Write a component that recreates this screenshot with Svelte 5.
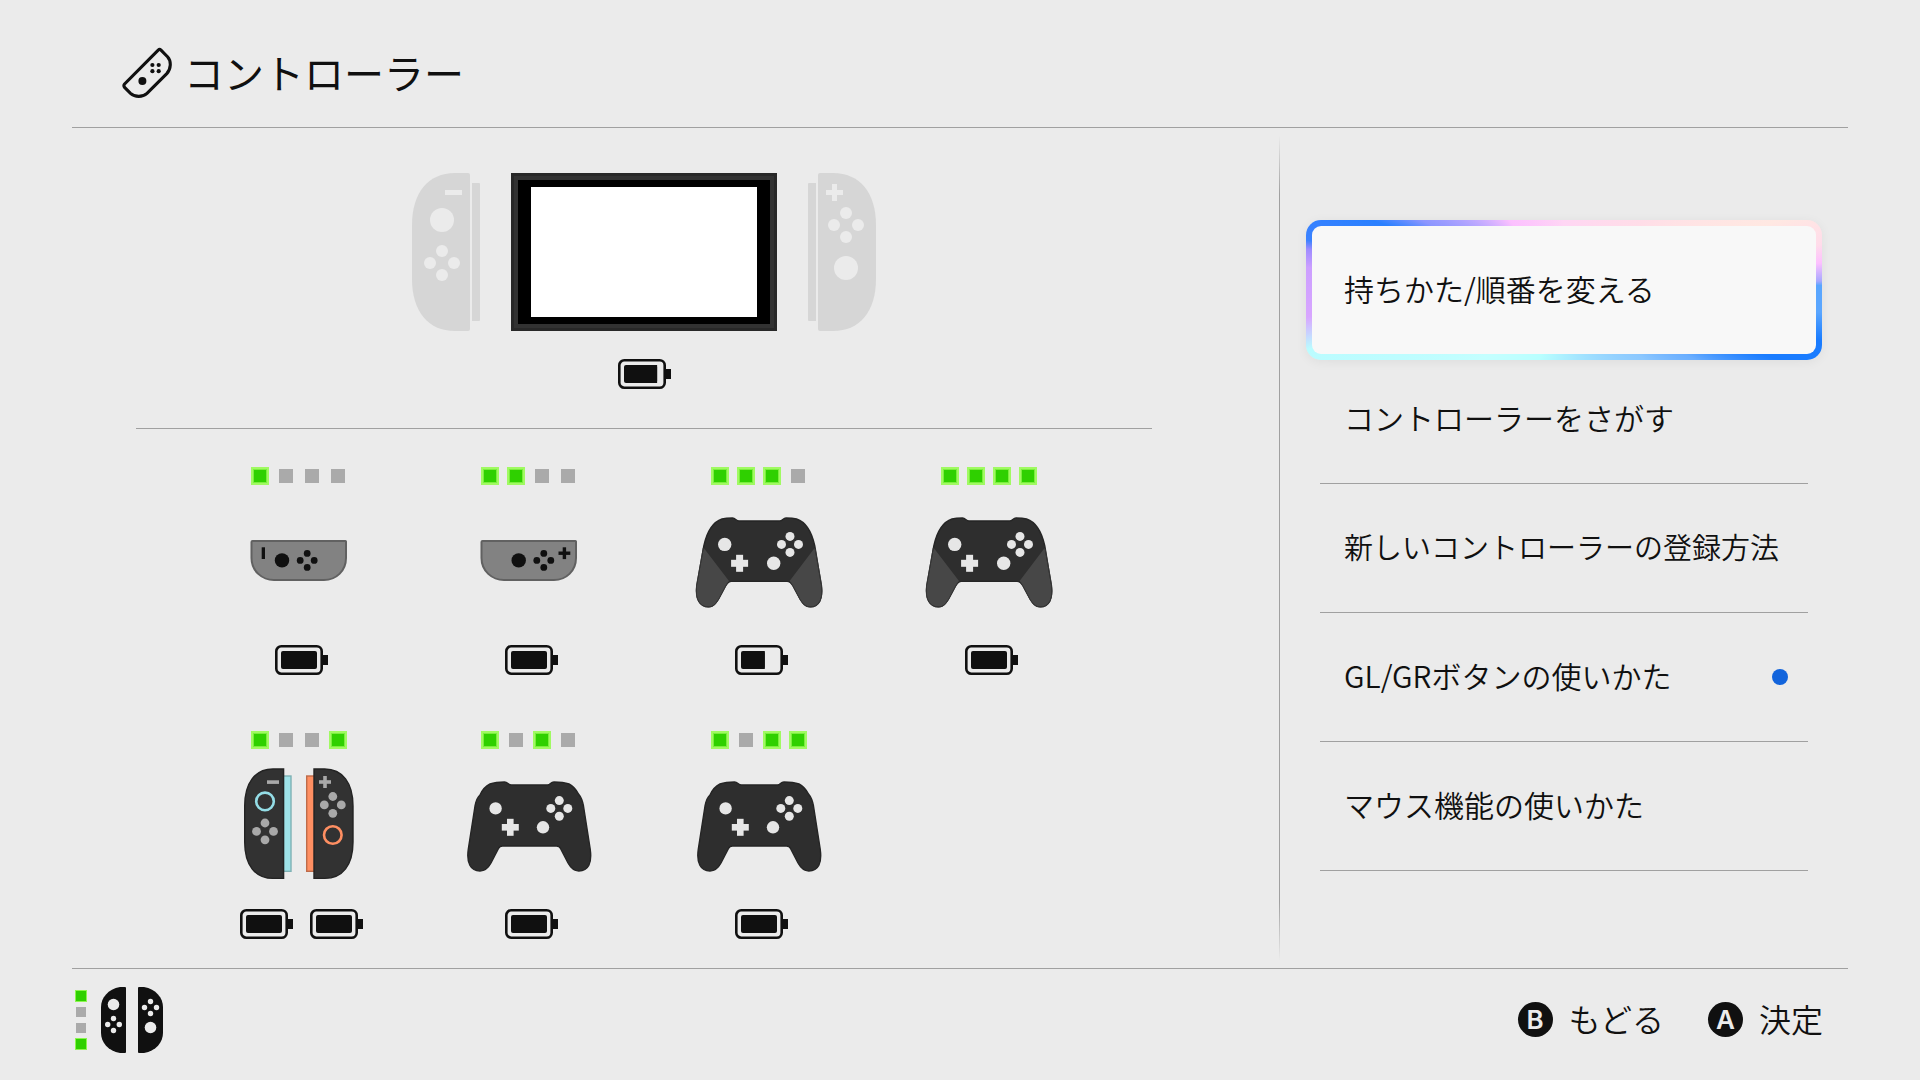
<script>
  // Controllers screen: console status, paired controllers, action menu

  let selected = $state(0);

  const menu = [
    { label: '持ちかた/順番を変える' },
    { label: 'コントローラーをさがす' },
    { label: '新しいコントローラーの登録方法', long: true },
    { label: 'GL/GRボタンの使いかた', unread: true },
    { label: 'マウス機能の使いかた' }
  ];

  // leds: player lamps, left to right. batteries: charge in percent
  const controllers = [
    { type: 'single-left', leds: [1, 0, 0, 0], batteries: [100] },
    { type: 'single-right', leds: [1, 1, 0, 0], batteries: [100] },
    { type: 'pro-grip', leds: [1, 1, 1, 0], batteries: [66] },
    { type: 'pro-grip', leds: [1, 1, 1, 1], batteries: [100] },
    { type: 'pair', leds: [1, 0, 0, 1], batteries: [100, 100] },
    { type: 'pro', leds: [1, 0, 1, 0], batteries: [100] },
    { type: 'pro', leds: [1, 0, 1, 1], batteries: [100] }
  ];
</script>

{#snippet battery(level)}
  <svg class="battery" width="53" height="30" viewBox="0 0 53 30" role="img" aria-label="{level}%">
    <rect x="1.3" y="1.3" width="45.4" height="27.4" rx="5" fill="none" stroke="#101010" stroke-width="2.6" />
    <rect x="47" y="10" width="6" height="10" fill="#101010" />
    <rect x="6" y="6" width={level * 0.36} height="18" rx="2" fill="#101010" />
    {#if level < 100}
      <rect x="12" y="6" width={level * 0.36 - 6} height="18" fill="#101010" />
    {/if}
  </svg>
{/snippet}

<!-- four round buttons in a diamond -->
{#snippet diamond(x, y, dx, dy, r)}
  <circle cx={x} cy={y - dy} {r} />
  <circle cx={x - dx} cy={y} {r} />
  <circle cx={x + dx} cy={y} {r} />
  <circle cx={x} cy={y + dy} {r} />
{/snippet}

{#snippet plus(x, y, size, thick)}
  <rect x={x - size / 2} y={y - thick / 2} width={size} height={thick} />
  <rect x={x - thick / 2} y={y - size / 2} width={thick} height={size} />
{/snippet}

{#snippet device(type)}
  <svg width="140" height="120" viewBox="0 0 140 120" aria-hidden="true">
    {#if type === 'single-left' || type === 'single-right'}
      <path d="M23.5 40H116.5Q117 40 117 40.5V57C117 70 107 79 95 79H45C33 79 22.5 70 22.5 57V41Q22.5 40 23.5 40Z" fill="#828282" stroke="#616161" stroke-width="2" />
      <g fill="#101010">
        {#if type === 'single-left'}
          <rect x="32.7" y="46.3" width="3.3" height="11.7" />
          <circle cx="53" cy="59.4" r="7.2" />
          {@render diamond(78.2, 59.4, 7, 7, 3.4)}
        {:else}
          <circle cx="59.7" cy="59.4" r="7.2" />
          {@render diamond(84.8, 59.4, 7, 7, 3.4)}
          {@render plus(105.4, 52.2, 11.8, 3.4)}
        {/if}
      </g>
    {:else if type === 'pair'}
      <rect x="54" y="11" width="8" height="95.3" fill="#9fe3e9" stroke="#7eb1b4" stroke-width="1.4" />
      <rect x="77.7" y="11" width="8" height="95.3" fill="#ff8f62" stroke="#be6b4a" stroke-width="1.4" />
      <g fill="#323232" stroke="#232323" stroke-width="1.4">
        <path d="M54.6 4H44C26 4 15.7 18 15.7 41V77C15.7 100 26 113.4 44 113.4H54.6Z" />
        <path d="M85 4H95.6C113.6 4 124 18 124 41V77C124 100 113.6 113.4 95.6 113.4H85Z" />
      </g>
      <g fill="#a9a9a9">
        <rect x="38" y="15.3" width="12" height="3.6" />
        {@render diamond(36, 66.4, 8.5, 8.4, 4.4)}
        {@render plus(96, 17, 12, 3.6)}
        {@render diamond(103.8, 39.9, 8.5, 8.4, 4.4)}
      </g>
      <circle cx="36" cy="36.4" r="8.8" fill="none" stroke="#94dde6" stroke-width="2.6" />
      <circle cx="103.8" cy="70" r="8.8" fill="none" stroke="#ff8f62" stroke-width="2.6" />
    {:else if type === 'pro-grip'}
      <path d="M33 18C37 17 41 17 43.5 17C46.5 17 47 20 50 20H90.6C93.6 20 94 17 97 17C100 17 103.6 17 107.6 18C118 21.5 123 32 125.8 45L132.2 84C134.2 98 130 105.8 121.5 105.8C116 105.8 113.5 102 111 98L104 85C102 81.5 100.5 80.4 98 80.4H42.6C40 80.4 38.6 81.5 36.6 85L29.6 98C27 102 24.6 105.8 19.5 105.8C10.6 105.8 6 98 8 84L14.8 45C17.6 32 22.6 21.5 33 18Z" fill="#2e2e2e" stroke="#252525" stroke-width="1.4" />
      <g fill="#474747">
        <path d="M14.8 47L40 80Q38.6 81 36.6 85L29.6 98C27 102 24.6 105.6 19.5 105.6C10.6 105.6 6 98 8 84Z" />
        <path d="M125.6 47L100.6 80Q102 81 104 85L111 98C113.5 102 116 105.6 121.5 105.6C130 105.6 134 98 132 84Z" />
      </g>
      <g fill="none" stroke="#363636">
        <path d="M14.3 47L7.6 84C5.8 98 10.6 106 19.5 106C24.6 106 27 102.5 29.8 98L36.6 85L38.5 82" />
        <path d="M126 47L132.6 84C134.4 98 130 106 121.5 106C116 106 113.5 102.5 110.8 98L104 85L102 82" />
      </g>
      <g fill="#e6e6e6">
        <circle cx="35.7" cy="43.4" r="6.7" />
        <circle cx="84.7" cy="62.3" r="6.7" />
        {@render plus(50.6, 62.3, 17, 7)}
        {@render diamond(101, 43.4, 8.5, 8, 4.5)}
      </g>
    {:else}
      <path d="M31 19C35 17.6 41 17 45.5 17C49 17 49 20 52.5 20H88.5C91.5 20 91.5 17 95 17C100 17 106 17.6 110 19C115 21.5 117 24.5 119.5 29Q123 33 124.5 41L131.2 84C133.2 98 129.5 106 119.8 106C114.5 106 111.5 102.5 109 98L101.5 83.5C100.5 81.5 99.5 81 97.5 81H43.5C41.5 81 40.5 81.5 39.5 83.5L32 98C29.5 102.5 26.5 106 21 106C11.5 106 7.3 98 9.3 84L16 41Q17.5 33 21 30C23.5 24.5 26 21.5 31 19Z" fill="#2e2e2e" stroke="#252525" stroke-width="1.4" />
      <g fill="#e6e6e6">
        <circle cx="36.6" cy="43.4" r="6.2" />
        <circle cx="84" cy="62.3" r="6.2" />
        {@render plus(51.3, 62.3, 17, 6.6)}
        {@render diamond(100.3, 43.4, 8.5, 7.8, 4.5)}
      </g>
    {/if}
  </svg>
{/snippet}

<div class="screen">
  <header>
    <svg width="50" height="52" viewBox="0 0 50 52" aria-hidden="true">
      <path d="M36.2 3.1Q37.6 1.8 39 3.1L45.5 9.7C49.6 14.2 49 22 44.8 26.6L25 46.3C20.5 50.4 13 50.4 8.5 46.3L2.6 40.4Q1.2 38.7 2.6 37Z" fill="none" stroke="#101010" stroke-width="3.1" />
      <g fill="#101010">
        <circle cx="30.4" cy="18" r="2.1" />
        <circle cx="36.7" cy="18" r="2.1" />
        <circle cx="30.4" cy="24.2" r="2.1" />
        <circle cx="36.7" cy="24.2" r="2.1" />
        <circle cx="20.4" cy="34" r="4" />
      </g>
    </svg>
    <h1>コントローラー</h1>
  </header>

  <main>
    <section class="status">
      <div class="console">
        <svg width="68" height="158" viewBox="0 0 68 158" aria-hidden="true">
          <g fill="#d6d6d6">
            <path d="M56 0H43C16 0 0 20 0 52V106C0 138 16 158 43 158H56Q58 158 58 156V2Q58 0 56 0Z" />
            <path d="M60 10H67Q68 10 68 11V147Q68 148 67 148H60Z" />
          </g>
          <g fill="#ebebeb">
            <rect x="33" y="17" width="17" height="5" />
            <circle cx="30" cy="47" r="12" />
            {@render diamond(30, 90, 12, 12, 6)}
          </g>
        </svg>
        <div class="tablet"><div class="display"></div></div>
        <svg width="68" height="158" viewBox="0 0 68 158" aria-hidden="true">
          <g fill="#d6d6d6">
            <path d="M12 0H25C52 0 68 20 68 52V106C68 138 52 158 25 158H12Q10 158 10 156V2Q10 0 12 0Z" />
            <path d="M8 10H1Q0 10 0 11V147Q0 148 1 148H8Z" />
          </g>
          <g fill="#ebebeb">
            {@render plus(26.5, 19.5, 17, 5)}
            {@render diamond(38, 52, 12, 12, 6)}
            <circle cx="38" cy="95" r="12" />
          </g>
        </svg>
      </div>
      <div class="console-battery">{@render battery(92)}</div>

      <ul class="controllers">
        {#each controllers as controller}
          <li>
            <div class="leds">
              {#each controller.leds as on}
                <span class="led" class:on></span>
              {/each}
            </div>
            <div class="device">{@render device(controller.type)}</div>
            <div class="batteries">
              {#each controller.batteries as level}
                {@render battery(level)}
              {/each}
            </div>
          </li>
        {/each}
      </ul>
    </section>

    <nav>
      <ul class="menu">
        {#each menu as item, i}
          <li class:current={selected === i}>
            <button type="button" class:selected={selected === i} class:long={item.long} onclick={() => (selected = i)}>
              <span class="label">{item.label}</span>
              {#if item.unread}<span class="dot"></span>{/if}
            </button>
          </li>
        {/each}
      </ul>
    </nav>
  </main>

  <footer>
    <div class="active-pad">
      <div class="leds small">
        <span class="led on"></span>
        <span class="led"></span>
        <span class="led"></span>
        <span class="led on"></span>
      </div>
      <svg width="62" height="66" viewBox="0 0 62 66" aria-hidden="true">
        <g fill="#101010">
          <path d="M24 0H19C7 2 0 11 0 20V46C0 55 7 64 19 66H24Q25 66 25 65V1Q25 0 24 0Z" />
          <path d="M38 0H43C55 2 62 11 62 20V46C62 55 55 64 43 66H38Q37 66 37 65V1Q37 0 38 0Z" />
        </g>
        <g fill="#ebebeb">
          <circle cx="12.5" cy="17.5" r="5.8" />
          {@render diamond(12.5, 37.5, 5.8, 6, 2.7)}
          {@render diamond(49.5, 20.5, 6, 6, 2.7)}
          <circle cx="49.5" cy="40.5" r="5.8" />
        </g>
      </svg>
    </div>
    <div class="hints">
      <button type="button"><span class="key">B</span><span class="label">もどる</span></button>
      <button type="button"><span class="key">A</span><span class="label">決定</span></button>
    </div>
  </footer>
</div>

<style>
  :global(body) {
    background: #ebebeb;
  }

  .screen {
    display: flex;
    flex-direction: column;
    box-sizing: border-box;
    min-height: 100vh;
    padding: 0 72px;
    color: #101010;
    font-family: 'Noto Sans CJK JP', sans-serif;
    font-weight: 350;
  }

  svg {
    display: block;
    flex: none;
  }

  ul {
    list-style: none;
    margin: 0;
    padding: 0;
  }

  button {
    border: none;
    background: none;
    padding: 0;
    color: inherit;
    font: inherit;
    cursor: pointer;
  }

  /* the CJK font sits low in its line box */
  .label {
    padding-bottom: 4px;
  }

  header {
    display: flex;
    align-items: center;
    gap: 12px;
    box-sizing: border-box;
    height: 128px;
    padding: 18px 50px 0;
    border-bottom: 1px solid #a0a0a0;
  }

  h1 {
    margin: 0;
    padding-bottom: 2px;
    font-size: 40px;
    line-height: 52px;
    font-weight: 400;
  }

  main {
    flex: 1;
    display: flex;
  }

  /* Left side */
  .status {
    flex: 1;
    padding: 45px 127px 0 64px;
  }

  .console {
    display: flex;
    justify-content: center;
    gap: 31px;
  }

  .tablet {
    box-sizing: border-box;
    width: 266px;
    height: 158px;
    padding: 7px 13px;
    border: 7px solid #323232;
    outline: 3px solid #282828;
    outline-offset: -3px;
    background: #000;
  }

  .display {
    height: 100%;
    background: #fff;
  }

  .console-battery {
    display: flex;
    justify-content: center;
    padding: 28px 0 39px;
    border-bottom: 1px solid #a0a0a0;
  }

  .controllers {
    display: grid;
    grid-template-columns: repeat(4, 230px);
    justify-content: center;
    row-gap: 58px;
    padding-top: 40px;
  }

  .controllers li {
    display: flex;
    flex-direction: column;
    align-items: center;
  }

  .leds {
    display: flex;
    gap: 12px;
  }

  .led {
    width: 14px;
    height: 14px;
    background: #aaa;
  }

  .led.on {
    background: #2fd000;
    box-shadow: 0 0 0 2px #a0fa62, inset 0 0 0 1px #7bee3e;
  }

  .device {
    padding: 18px 0 24px;
  }

  .batteries {
    display: flex;
    gap: 17px;
    padding-left: 5px;
  }

  /* Right side */
  nav {
    width: 569px;
    box-sizing: border-box;
    padding: 98px 40px 0;
    border-left: 1px solid;
    border-image: linear-gradient(transparent 1%, #a0a0a0 8%, #a0a0a0 92%, transparent 99%) 1;
  }

  .menu li {
    border-bottom: 1px solid #a0a0a0;
  }

  .menu li.current {
    border-color: transparent;
  }

  .menu button {
    display: flex;
    align-items: center;
    justify-content: space-between;
    box-sizing: border-box;
    width: 100%;
    height: 128px;
    padding: 0 20px 0 24px;
    font-size: 30px;
    line-height: 40px;
    white-space: nowrap;
  }

  .menu button.long {
    font-size: 29px;
  }

  .menu button.selected {
    width: calc(100% + 28px);
    height: 140px;
    margin: -6px -14px;
    padding: 0 28px 0 32px;
    border: 6px solid transparent;
    border-radius: 15px;
    background:
      linear-gradient(#f8f8f8, #f8f8f8) padding-box,
      conic-gradient(
        #ffd6f4 0deg, #ffdde8 49deg, #ffe8e2 72deg, #ffdcea 80deg, #fdc0ff 84deg,
        #a8a8ff 88deg, #5aa6ff 89deg, #5aa6ff 95deg, #1a7cff 101deg, #1a7cff 108deg,
        #6aaeff 118deg, #8cc8ff 131deg, #b8ffff 200deg, #c4ffff 230deg, #bafcff 257deg,
        #d8a6ff 264deg, #cc9fff 275deg, #9f8cff 279deg, #3c82ff 281deg, #2a80ff 290deg,
        #8c96ff 296deg, #fcc0ff 322deg, #ffd6f4 360deg
      ) border-box;
    box-shadow: 0 2px 12px rgba(0, 0, 0, 0.06);
  }

  .dot {
    width: 16px;
    height: 16px;
    border-radius: 50%;
    background: #1264dc;
  }

  /* Bottom bar */
  footer {
    display: flex;
    justify-content: space-between;
    align-items: center;
    box-sizing: border-box;
    height: 112px;
    padding: 0 25px 10px 4px;
    border-top: 1px solid #a0a0a0;
  }

  .active-pad {
    display: flex;
    align-items: center;
    gap: 15px;
  }

  .leds.small {
    flex-direction: column;
    gap: 6px;
  }

  .small .led {
    width: 10px;
    height: 10px;
  }

  .small .led.on {
    box-shadow: 0 0 0 1px #8cf650;
  }

  .hints {
    display: flex;
    gap: 44px;
  }

  .hints button {
    display: flex;
    align-items: center;
    gap: 16px;
    font-size: 32px;
    line-height: 40px;
  }

  .key {
    width: 35px;
    height: 35px;
    border-radius: 50%;
    background: #101010;
    color: #ebebeb;
    font: 600 26px/35px Inter, sans-serif;
    text-align: center;
  }
</style>
